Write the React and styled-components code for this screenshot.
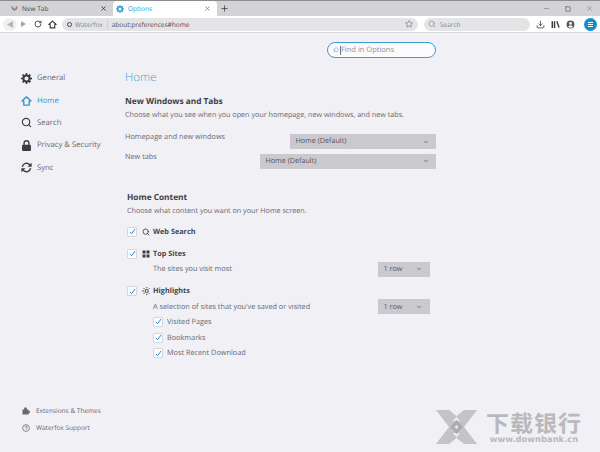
import styled, { createGlobalStyle } from "styled-components";
import { Search, ChevronDown, RotateCw, Star, Download, Plus, X, Minus, Square } from "lucide-react";

const GlobalStyle = createGlobalStyle`
  html, body {
    margin: 0;
    padding: 0;
    background: #f0f0f5;
  }
  body {
    font-family: "Open Sans", "Noto Sans", sans-serif;
    color: #686872;
    text-rendering: geometricPrecision;
  }
`;

const Page = styled.div`
  position: relative;
  display: flex;
  flex-direction: column;
  width: 600px;
  height: 452px;
  overflow: hidden;
  background: #f0f0f5;
`;

const TabStrip = styled.div`
  display: flex;
  align-items: flex-end;
  height: 15px;
  padding-left: 3px;
  border-top: 1px solid #8d8d90;
  background: #d3d3d6;
`;

const Tab = styled.div`
  display: flex;
  align-items: center;
  gap: 4px;
  box-sizing: border-box;
  width: ${(p) => p.$width}px;
  height: 15px;
  padding: 0 6px 0 ${(p) => p.$left}px;
  border-radius: 4px 4px 0 0;
  background: ${(p) => (p.$active ? "#ffffff" : "transparent")};
  color: ${(p) => (p.$active ? "#2f9bd0" : "#45454d")};
  font-size: 6.5px;
`;

const TabTitle = styled.span`
  flex: 1;
`;

const NewTab = styled.div`
  display: flex;
  align-items: center;
  height: 15px;
  margin-left: 3px;
  color: #38383d;
`;

const WindowButtons = styled.div`
  display: flex;
  align-items: center;
  gap: 15px;
  height: 15px;
  margin-left: auto;
  padding-right: 7px;
  color: #55555c;
`;

const Toolbar = styled.div`
  display: flex;
  align-items: center;
  box-sizing: border-box;
  height: 17px;
  padding: 0 0 0 3px;
  background: #ffffff;
  border-bottom: 1px solid #d8d8dc;
`;

const NavButton = styled.div`
  display: flex;
  align-items: center;
  justify-content: center;
  width: ${(p) => p.$width || 14}px;
  height: 13px;
  border-radius: 50%;
  background: ${(p) => p.$bg || "transparent"};
  color: #38383d;
`;

const UrlBar = styled.div`
  display: flex;
  align-items: center;
  box-sizing: border-box;
  width: 356px;
  height: 13px;
  margin-left: 3px;
  padding: 0 5px;
  border-radius: 7px;
  background: #e4e4e7;
  font-size: 6.5px;
`;

const Identity = styled.span`
  display: flex;
  align-items: center;
  gap: 3px;
  padding-right: 4px;
  margin-right: 4px;
  border-right: 1px solid #cfcfd3;
  color: #85858a;
`;

const IdentityDot = styled.i`
  width: 3px;
  height: 3px;
  border: 1px solid #45454d;
  border-radius: 50%;
`;

const UrlText = styled.span`
  flex: 1;
  color: #4a4a4f;
`;

const SearchBar = styled.div`
  display: flex;
  align-items: center;
  gap: 4px;
  box-sizing: border-box;
  width: 106px;
  height: 13px;
  margin-left: 6px;
  padding-left: 4px;
  border-radius: 7px;
  background: #e4e4e7;
  color: #85858a;
  font-size: 6.5px;
`;

const ToolIcons = styled.div`
  display: flex;
  align-items: center;
  gap: 6px;
  margin-left: 6px;
  color: #38383d;
`;

const MenuButton = styled.div`
  display: flex;
  flex-direction: column;
  align-items: center;
  justify-content: center;
  gap: 1px;
  width: 13px;
  height: 13px;
  margin-left: 9px;
  border-radius: 50%;
  background: #0f8fd0;

  i {
    width: 5px;
    height: 1px;
    background: #ffffff;
  }
`;

const Body = styled.div`
  flex: 1;
  display: flex;
  min-height: 0;
`;

const Sidebar = styled.nav`
  display: flex;
  flex-direction: column;
  box-sizing: border-box;
  width: 125px;
  padding: 34px 0 19px 21px;
`;

const NavItem = styled.div`
  display: flex;
  align-items: center;
  gap: 5px;
  height: 22.4px;
  color: ${(p) => (p.$active ? "#2f9bd0" : "#686872")};
  font-size: 7.7px;
`;

const IconSlot = styled.span`
  display: flex;
  align-items: center;
  justify-content: center;
  width: 11px;
  height: 11px;
  color: ${(p) => (p.$active ? "#2f9bd0" : "#3c3c43")};
`;

const FootLinks = styled.div`
  display: flex;
  flex-direction: column;
  gap: 6px;
  margin-top: auto;
`;

const FootLink = styled.div`
  display: flex;
  align-items: center;
  gap: 6px;
  height: 11px;
  padding-left: 1px;
  color: #686872;
  font-size: 6.5px;
`;

const Content = styled.main`
  display: flex;
  flex-direction: column;
  box-sizing: border-box;
  width: 311px;
  padding-top: 9px;
`;

const FindBox = styled.div`
  display: flex;
  align-items: center;
  gap: 0.5px;
  box-sizing: border-box;
  width: 109px;
  height: 16px;
  margin-left: 202px;
  padding-left: 5px;
  border: 1px solid #3a9cc8;
  border-radius: 8px;
  background: #fbfbfd;
  color: #8d8d93;
  font-size: 7.5px;

  svg {
    transform: scaleX(-1);
  }
`;

const Caret = styled.i`
  width: 1px;
  height: 9px;
  background: #77777d;
`;

const Heading = styled.h1`
  margin: 12px 0 0;
  color: #4ba3d0;
  font-size: 11.5px;
  font-weight: 300;
  line-height: 16px;
`;

const SectionTitle = styled.h2`
  margin: ${(p) => p.$top}px 0 0 ${(p) => p.$left || 0}px;
  color: #3f3f47;
  font-size: 8.3px;
  font-weight: 700;
  line-height: 12px;
`;

const Description = styled.p`
  margin: 2px 0 0 ${(p) => p.$left || 0}px;
  font-size: 7.2px;
  line-height: 11px;
`;

const SelectRow = styled.div`
  display: flex;
  align-items: flex-start;
  justify-content: space-between;
  margin-top: ${(p) => p.$top}px;
  font-size: 7.3px;
  line-height: 11px;

  > div {
    margin-top: 2px;
  }
`;

const Select = styled.div`
  display: flex;
  align-items: center;
  justify-content: space-between;
  box-sizing: border-box;
  width: ${(p) => p.$width}px;
  height: 15px;
  padding: 0 ${(p) => p.$right || 7}px 0 5.5px;
  background: #c9c9ce;
  color: #55555d;
  font-size: 7.2px;
`;

const CheckList = styled.div`
  display: flex;
  flex-direction: column;
  margin: 7.5px 6px 0 2px;
`;

const CheckRow = styled.div`
  display: flex;
  align-items: center;
  gap: 4px;
  height: 15.7px;
  margin-top: ${(p) => p.$top || 0}px;
  margin-left: ${(p) => p.$left || 0}px;
  font-size: 7.3px;
`;

const CheckBox = styled.span`
  display: flex;
  align-items: center;
  justify-content: center;
  box-sizing: border-box;
  width: 10px;
  height: 10px;
  border: 1px solid #d6d6de;
  border-radius: 1px;
  background: #fbfbfe;
`;

const RowIcon = styled.span`
  display: flex;
  align-items: center;
  justify-content: center;
  width: 8px;
  margin: 0 -1px 0 1px;
  color: #3c3c43;
`;

const RowTitle = styled.b`
  color: #45454d;
  font-size: 7.3px;
  font-weight: 700;
`;

const SubRow = styled.div`
  display: flex;
  align-items: center;
  justify-content: space-between;
  height: 15px;
  margin-left: 26px;
  font-size: 7.3px;
`;

const Watermark = styled.div`
  position: absolute;
  right: 18px;
  bottom: 8px;
  display: flex;
  align-items: center;
  gap: 9px;
  color: #b9b9bd;
`;

const WatermarkText = styled.div`
  display: flex;
  flex-direction: column;
  align-items: center;
`;

const WatermarkTitle = styled.span`
  font-family: "Noto Sans CJK SC", sans-serif;
  font-size: 23px;
  font-weight: 700;
  line-height: 24px;
  letter-spacing: 1px;
`;

const WatermarkUrl = styled.span`
  font-family: "DejaVu Sans", sans-serif;
  font-size: 8.4px;
  font-weight: 700;
  line-height: 10px;
`;

const Gear = ({ size = 11 }) => (
  <svg width={size} height={size} viewBox="0 0 16 16">
    <path
      fill="currentColor"
      fillRule="evenodd"
      d="M7 0h2l.4 2.3 1.3.5 1.900-1.300 1.900 1.900-1.300 1.900.5 1.300L16 7v2l-2.300.4-.5 1.300 1.300 1.900-1.900 1.900-1.900-1.300-1.300.5L9 16H7l-.4-2.300-1.300-.5-1.900 1.300-1.900-1.900 1.300-1.900-.5-1.300L0 9V7l2.300-.4.5-1.300-1.300-1.900 1.900-1.900 1.900 1.300 1.300-.5zM8 5a3 3 0 1 0 0 6 3 3 0 0 0 0-6z"
    />
  </svg>
);

const HomeIcon = ({ size = 12, width = 2 }) => (
  <svg width={size} height={size} viewBox="0 0 16 16" fill="none" stroke="currentColor" strokeWidth={width} strokeLinejoin="round">
    <path d="M8 2 1.500 8H4v6h8V8h2.500z" />
  </svg>
);

const Lock = () => (
  <svg width="11" height="11" viewBox="0 0 16 16">
    <path
      fill="currentColor"
      fillRule="evenodd"
      d="M8 0a4.500 4.500 0 0 0-4.500 4.500V7H3a1.500 1.500 0 0 0-1.500 1.500v6A1.500 1.500 0 0 0 3 16h10a1.500 1.500 0 0 0 1.500-1.500v-6A1.500 1.500 0 0 0 13 7h-.5V4.500A4.500 4.500 0 0 0 8 0zm0 2a2.500 2.500 0 0 1 2.500 2.500V7h-5V4.500A2.500 2.500 0 0 1 8 2z"
    />
  </svg>
);

const SyncIcon = () => (
  <svg width="11" height="11" viewBox="0 0 16 16" fill="none" stroke="currentColor" strokeWidth="2">
    <path d="M2 7a6 6 0 0 1 10.500-3L14 5.500" />
    <path d="M14 9a6 6 0 0 1-10.500 3L2 10.500" />
    <path fill="currentColor" stroke="none" d="M15.500 1v6h-6zM.5 15V9h6z" />
  </svg>
);

const Puzzle = () => (
  <svg width="8" height="8" viewBox="0 0 16 16" fill="currentColor">
    <rect x="1" y="5" width="12" height="10" />
    <circle cx="7" cy="3.500" r="3" />
    <circle cx="13.500" cy="10" r="2.500" />
  </svg>
);

const Help = () => (
  <svg width="8" height="8" viewBox="0 0 16 16" fill="none" stroke="currentColor" strokeWidth="1.500">
    <circle cx="8" cy="8" r="6.800" />
    <path d="M5.800 6.200A2.200 2.200 0 1 1 8 8.500V10" />
    <path d="M8 11.200v1.500" />
  </svg>
);

const Grid = () => (
  <svg width="8" height="8" viewBox="0 0 8 8">
    <path fill="currentColor" d="M.5.5h3v3h-3zM4.500.5h3v3h-3zM.5 4.500h3v3h-3zM4.500 4.500h3v3h-3z" />
  </svg>
);

const Sparkle = () => (
  <svg width="8" height="8" viewBox="0 0 16 16" fill="none" stroke="currentColor" strokeWidth="1.800">
    <circle cx="9.500" cy="8" r="3" />
    <path d="M9.500 0v2.500M9.500 13.500V16M0 8h4.500M3 2l3 3M15 2.500l-2 2M3 14l3-3M15 13.500l-2-2" />
  </svg>
);

const Library = () => (
  <svg width="9" height="9" viewBox="0 0 16 16">
    <path fill="currentColor" d="M1 2h2.500v12H1zM5 2h2.500v12H5zM9.200 2.500l2.300-.8L15.500 13l-2.300.8z" />
  </svg>
);

const Account = () => (
  <svg width="9" height="9" viewBox="0 0 16 16">
    <path
      fill="#55555c"
      fillRule="evenodd"
      d="M8 1a7 7 0 1 0 0 14A7 7 0 0 0 8 1zm0 2.500a2.500 2.500 0 1 1 0 5 2.500 2.500 0 0 1 0-5zM3.800 12c.8-1.500 2.300-2.200 4.200-2.200s3.400.7 4.200 2.200a5.500 5.500 0 0 1-8.400 0z"
    />
  </svg>
);

const ArrowLeft = () => (
  <svg width="6" height="7" viewBox="0 0 6 7">
    <path fill="#b5b5ba" d="M6 0v7L0 3.500z" />
  </svg>
);

const ArrowRight = () => (
  <svg width="5" height="6" viewBox="0 0 5 6">
    <path fill="#a5a5aa" d="M0 0v6l5-3z" />
  </svg>
);

const WatermarkLogo = () => (
  <svg width="41" height="34" viewBox="0 0 41 34">
    <path fill="#c4c4c7" d="M0 0h13l7.500 6L28 0h13L28 17l13 17H28l-7.500-6L13 34H0l13-17z" />
    <path fill="#ececf0" d="M20.500 6.500 24 11h-7zM20.500 27.500 24 23h-7z" />
    <path fill="#adadb1" d="M20.500 10 27 17l-6.500 7L14 17z" />
    <path fill="#ececf0" d="M20.500 15 22.500 17l-2 2-2-2z" />
  </svg>
);

const Tick = () => (
  <CheckBox>
    <svg width="7" height="7" viewBox="0 0 7 7" fill="none" stroke="#2f94cc" strokeWidth="1">
      <path d="M1 4l1.600 1.800L6 1" />
    </svg>
  </CheckBox>
);

function SmallSelect({ width, right, label }) {
  return (
    <Select $width={width} $right={right}>
      {label}
      <ChevronDown size={6} strokeWidth={3} />
    </Select>
  );
}

export default function App() {
  return (
    <Page>
      <GlobalStyle />
      <TabStrip>
        <Tab $width={110} $left={8}>
          <svg width="7" height="5" viewBox="0 0 8 6">
            <path fill="#85858a" d="M0 0l2 1 2 3 2-3 2-1-1 4-3 2-3-2z" />
          </svg>
          <TabTitle>New Tab</TabTitle>
          <X size={7} strokeWidth={3} color="#38383d" />
        </Tab>
        <Tab $active $width={104} $left={3}>
          <Gear size={8} />
          <TabTitle>Options</TabTitle>
          <X size={7} strokeWidth={3} />
        </Tab>
        <NewTab>
          <Plus size={9} strokeWidth={2} />
        </NewTab>
        <WindowButtons>
          <Minus size={7} strokeWidth={1.500} />
          <Square size={6} strokeWidth={2.500} />
          <X size={7} strokeWidth={1.500} />
        </WindowButtons>
      </TabStrip>

      <Toolbar>
        <NavButton $bg="#f0f0f3">
          <ArrowLeft />
        </NavButton>
        <NavButton $width={13}>
          <ArrowRight />
        </NavButton>
        <NavButton $width={15}>
          <RotateCw size={8} strokeWidth={2.500} />
        </NavButton>
        <NavButton $width={14}>
          <HomeIcon size={9} />
        </NavButton>
        <UrlBar>
          <Identity>
            <IdentityDot />
            Waterfox
          </Identity>
          <UrlText>about:preferences#home</UrlText>
          <Star size={8} strokeWidth={2} />
        </UrlBar>
        <SearchBar>
          <Search size={8} strokeWidth={2} />
          Search
        </SearchBar>
        <ToolIcons>
          <Download size={9} strokeWidth={2} />
          <Library />
          <Account />
        </ToolIcons>
        <MenuButton>
          <i />
          <i />
          <i />
        </MenuButton>
      </Toolbar>

      <Body>
        <Sidebar>
          <NavItem>
            <IconSlot>
              <Gear />
            </IconSlot>
            General
          </NavItem>
          <NavItem $active>
            <IconSlot $active>
              <HomeIcon />
            </IconSlot>
            Home
          </NavItem>
          <NavItem>
            <IconSlot>
              <Search size={11} strokeWidth={2.500} />
            </IconSlot>
            Search
          </NavItem>
          <NavItem>
            <IconSlot>
              <Lock />
            </IconSlot>
            Privacy &amp; Security
          </NavItem>
          <NavItem>
            <IconSlot>
              <SyncIcon />
            </IconSlot>
            Sync
          </NavItem>
          <FootLinks>
            <FootLink>
              <Puzzle />
              Extensions &amp; Themes
            </FootLink>
            <FootLink>
              <Help />
              Waterfox Support
            </FootLink>
          </FootLinks>
        </Sidebar>

        <Content>
          <FindBox>
            <Search size={6} strokeWidth={2} />
            <Caret />
            Find in Options
          </FindBox>
          <Heading>Home</Heading>
          <SectionTitle $top={10}>New Windows and Tabs</SectionTitle>
          <Description>Choose what you see when you open your homepage, new windows, and new tabs.</Description>
          <SelectRow $top={11}>
            Homepage and new windows
            <SmallSelect width={146} label="Home (Default)" />
          </SelectRow>
          <SelectRow $top={2.5}>
            New tabs
            <SmallSelect width={176} label="Home (Default)" />
          </SelectRow>

          <SectionTitle $top={23} $left={2}>Home Content</SectionTitle>
          <Description $left={2}>Choose what content you want on your Home screen.</Description>
          <CheckList>
            <CheckRow>
              <Tick />
              <RowIcon>
                <Search size={8} strokeWidth={2.500} />
              </RowIcon>
              <RowTitle>Web Search</RowTitle>
            </CheckRow>
            <CheckRow $top={6.4}>
              <Tick />
              <RowIcon>
                <Grid />
              </RowIcon>
              <RowTitle>Top Sites</RowTitle>
            </CheckRow>
            <SubRow>
              The sites you visit most
              <SmallSelect width={52} right={8} label="1 row" />
            </SubRow>
            <CheckRow $top={6.7}>
              <Tick />
              <RowIcon>
                <Sparkle />
              </RowIcon>
              <RowTitle>Highlights</RowTitle>
            </CheckRow>
            <SubRow>
              A selection of sites that you've saved or visited
              <SmallSelect width={52} right={8} label="1 row" />
            </SubRow>
            <CheckRow $left={26}>
              <Tick />
              Visited Pages
            </CheckRow>
            <CheckRow $left={26}>
              <Tick />
              Bookmarks
            </CheckRow>
            <CheckRow $left={26}>
              <Tick />
              Most Recent Download
            </CheckRow>
          </CheckList>
        </Content>
      </Body>

      <Watermark>
        <WatermarkLogo />
        <WatermarkText>
          <WatermarkTitle>下载银行</WatermarkTitle>
          <WatermarkUrl>www.downbank.cn</WatermarkUrl>
        </WatermarkText>
      </Watermark>
    </Page>
  );
}
